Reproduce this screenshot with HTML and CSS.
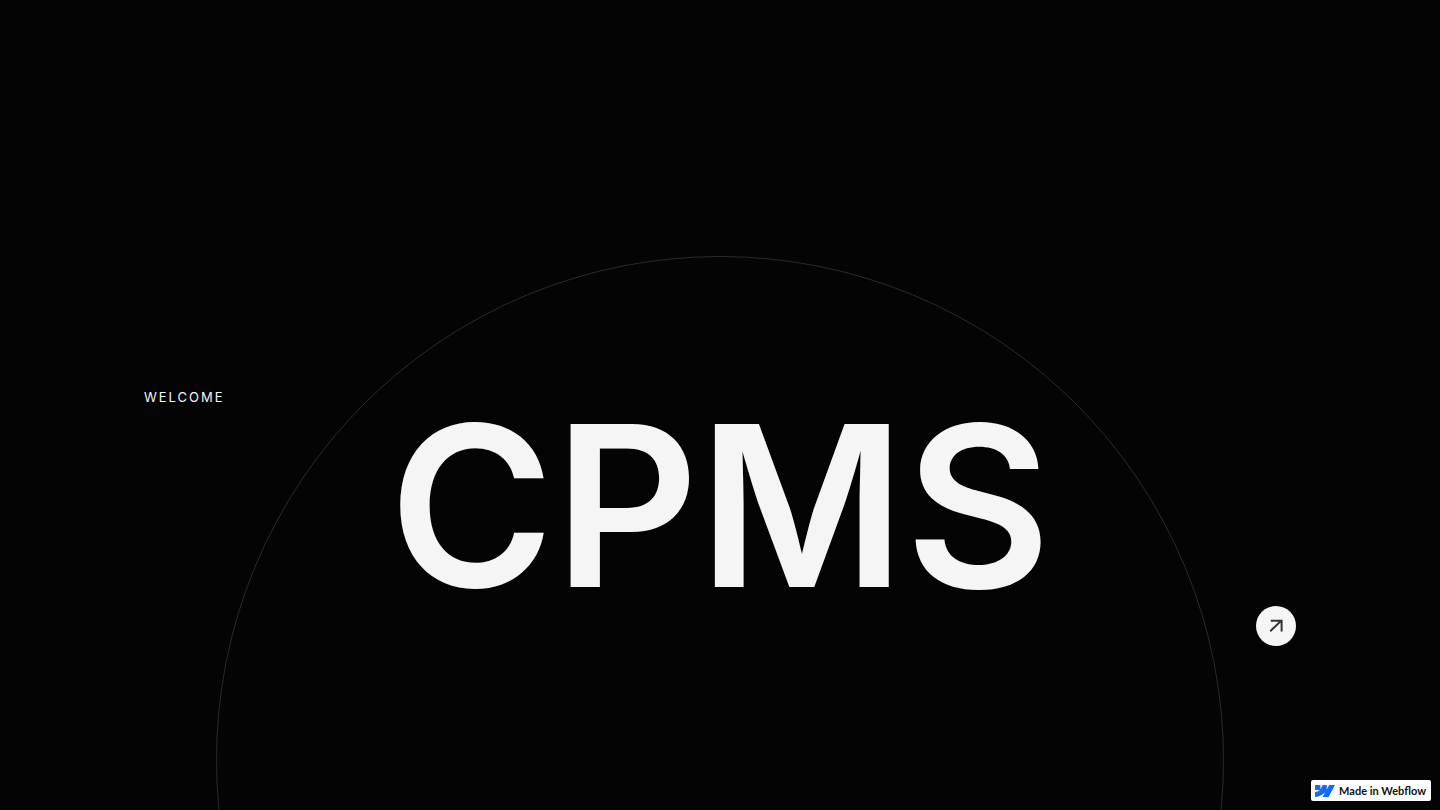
FILE: index.html
```html
<!DOCTYPE html>
<html lang="en">
<head>
  <meta charset="UTF-8" />
  <meta name="viewport" content="width=device-width, initial-scale=1.0"/>
  <title>CPMS</title>
  <link rel="stylesheet" href="styles.css">
</head>
<body>
  <main class="hero">
    <div class="hero-circle"></div>
    <p class="welcome">WELCOME</p>
    <h1 class="title">CPMS</h1>
    <a class="arrow-link" href="#" aria-label="Enter">
      <svg width="40" height="40" viewBox="0 0 40 40" fill="none" stroke="#333" stroke-width="2">
        <path d="M14.2 25.300 25.300 14.600M14.800 14.700h10.800v10.800"/>
      </svg>
    </a>
  </main>

  <a class="badge" href="#">
    <svg class="badge-logo" width="20" height="12" viewBox="0 0 20 12" fill="#146ef5">
      <path d="M20 0 13.600 12h-6l2.700-5C8.100 9.700 4.800 11.600 0 12V7.100s3.100-.2 4.900-2H0V0h5.400v4.300L7.700 0h4.100v4.300L14.200 0Z"/>
    </svg>
    <span>Made in Webflow</span>
  </a>
</body>
</html>
```

FILE: styles.css
```css
* {
  box-sizing: border-box;
}

body {
  margin: 0;
  background-color: #040404;
  color: #f5f5f5;
  font-family: Inter, sans-serif;
}

.hero {
  position: relative;
  display: flex;
  flex-direction: column;
  min-height: 100vh;
  padding: 388px 10vw 0;
  overflow: hidden;
}

.hero-circle {
  position: absolute;
  top: 256px;
  left: 15vw;
  width: 70vw;
  height: 70vw;
  border: 1px solid #292929;
  border-radius: 50%;
}

.welcome {
  position: relative;
  margin: 0;
  font-size: 13px;
  line-height: 18px;
  letter-spacing: 2px;
}

.title {
  position: relative;
  margin: 0;
  font-size: 224px;
  font-weight: 600;
  line-height: 200px;
  text-align: center;
}

.arrow-link {
  position: relative;
  align-self: flex-end;
  width: 40px;
  height: 40px;
  border-radius: 50%;
  background-color: #f5f5f5;
}

.arrow-link svg {
  display: block;
}

.badge {
  position: fixed;
  right: 9px;
  bottom: 9px;
  display: flex;
  align-items: center;
  gap: 4px;
  height: 21px;
  padding: 0 5px 0 4px;
  border-radius: 2px;
  background-color: #fff;
  color: #111;
  font-family: Lato, sans-serif;
  font-size: 11px;
  font-weight: 700;
  text-decoration: none;
}
```
